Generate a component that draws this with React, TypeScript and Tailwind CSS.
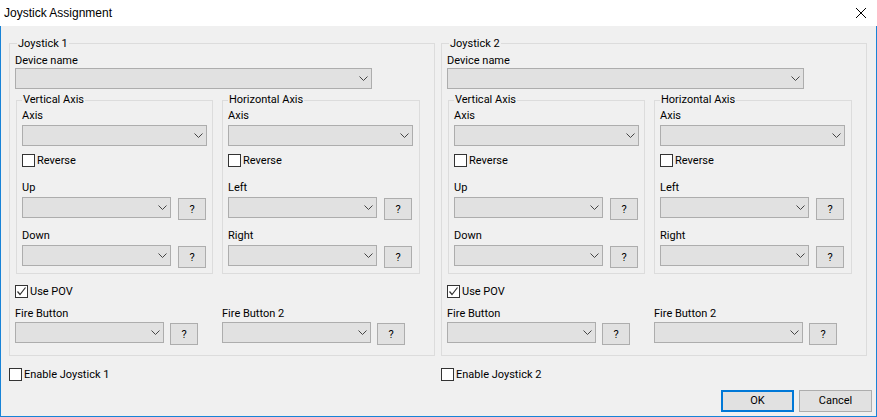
import React from "react";

type BoxProps = { title: string; className: string; legendClass: string; children: React.ReactNode };

function GroupBox({ title, className, legendClass, children }: BoxProps) {
    return (
        <div className={`relative border border-[#dcdcdc] ${className}`}>
            <span className={`absolute px-[1px] bg-[#f0f0f0] leading-[15px] ${legendClass}`}>{title}</span>
            {children}
        </div>
    );
}

function Combo({ className }: { className: string }) {
    return (
        <div className={`flex items-center justify-end h-[21px] bg-[#e1e1e1] border border-[#adadad] pr-[3px] ${className}`}>
            <svg width="9" height="5" viewBox="0 0 9 5" fill="none">
                <path d="M0.5 0.5L4.5 4.5L8.5 0.5" stroke="#444444" strokeWidth="1" />
            </svg>
        </div>
    );
}

function HelpButton() {
    return (
        <div className="mt-[1px] w-[28px] h-[22px] bg-[#e1e1e1] border border-[#adadad] flex items-center justify-center leading-none">
            ?
        </div>
    );
}

function CheckBox({ label, checked = false }: { label: string; checked?: boolean }) {
    return (
        <div className="flex items-center gap-[2px] h-[13px]">
            <div className="w-[13px] h-[13px] bg-white border border-[#333333] flex items-center justify-center shrink-0">
                {checked && (
                    <svg width="11" height="11" viewBox="0 0 11 11" fill="none">
                        <path d="M1.5 5.5L4 8.5L9.5 1.5" stroke="#333333" strokeWidth="1.2" />
                    </svg>
                )}
            </div>
            <span className="leading-[13px]">{label}</span>
        </div>
    );
}

function Label({ text, className = "" }: { text: string; className?: string }) {
    return <div className={`h-[15px] leading-[15px] ${className}`}>{text}</div>;
}

function ComboRow() {
    return (
        <div className="mt-[2px] flex items-start gap-[7px] h-[23px]">
            <Combo className="w-[149px]" />
            <HelpButton />
        </div>
    );
}

function AxisBox({ title, first, second, className }: { title: string; first: string; second: string; className: string }) {
    return (
        <GroupBox title={title} className={`h-[174px] pl-[5px] pt-[7px] ${className}`} legendClass="-top-[9px] left-[5px]">
            <Label text="Axis" />
            <Combo className="mt-[2px] w-[185px]" />
            <div className="mt-[8px]">
                <CheckBox label="Reverse" />
            </div>
            <Label text={first} className="mt-[13px]" />
            <ComboRow />
            <Label text={second} className="mt-[8px]" />
            <ComboRow />
        </GroupBox>
    );
}

function JoystickPanel({ n }: { n: number }) {
    return (
        <GroupBox title={`Joystick ${n}`} className="w-[426px] h-[313px] pl-[5px] pt-[9px]" legendClass="-top-[8px] left-[7px]">
            <Label text="Device name" />
            <Combo className="w-[357px]" />
            <div className="mt-[11px] ml-[1px] flex gap-[9px]">
                <AxisBox title="Vertical Axis" first="Up" second="Down" className="w-[197px]" />
                <AxisBox title="Horizontal Axis" first="Left" second="Right" className="w-[198px]" />
            </div>
            <div className="mt-[11px]">
                <CheckBox label="Use POV" checked />
            </div>
            <div className="mt-[8px] flex">
                <div className="w-[207px]">
                    <Label text="Fire Button" />
                    <div className="mt-[1px] flex items-start gap-[6px]">
                        <Combo className="w-[149px]" />
                        <HelpButton />
                    </div>
                </div>
                <div>
                    <Label text="Fire Button 2" />
                    <div className="mt-[1px] flex items-start gap-[6px]">
                        <Combo className="w-[149px]" />
                        <HelpButton />
                    </div>
                </div>
            </div>
        </GroupBox>
    );
}

export default function App() {
    return (
        <div className="w-[877px] h-[417px] flex flex-col bg-[#f0f0f0] text-[11px] text-black font-[Roboto,sans-serif] overflow-hidden">
            <div className="h-[26px] shrink-0 bg-white flex items-center justify-between pl-[4px] pr-[11px]">
                <span className="text-[12px] font-['Liberation_Sans',sans-serif]">Joystick Assignment</span>
                <svg width="10" height="10" viewBox="0 0 10 10" fill="none">
                    <path d="M0 0L10 10M10 0L0 10" stroke="#000000" strokeWidth="1" />
                </svg>
            </div>
            <div className="flex-1 flex flex-col border-x border-b border-[#1883d7] px-[8px] pt-[17px]">
                <div className="flex gap-[6px]">
                    <JoystickPanel n={1} />
                    <JoystickPanel n={2} />
                </div>
                <div className="mt-[12px] flex gap-[6px]">
                    <div className="w-[426px]">
                        <CheckBox label="Enable Joystick 1" />
                    </div>
                    <div className="w-[426px]">
                        <CheckBox label="Enable Joystick 2" />
                    </div>
                </div>
                <div className="mt-auto -mr-[4px] pb-[4px] flex justify-end gap-[5px]">
                    <div className="w-[73px] h-[22px] bg-[#e1e1e1] border-2 border-[#0078d7] flex items-center justify-center">OK</div>
                    <div className="w-[73px] h-[22px] bg-[#e1e1e1] border border-[#adadad] flex items-center justify-center">Cancel</div>
                </div>
            </div>
        </div>
    );
}
